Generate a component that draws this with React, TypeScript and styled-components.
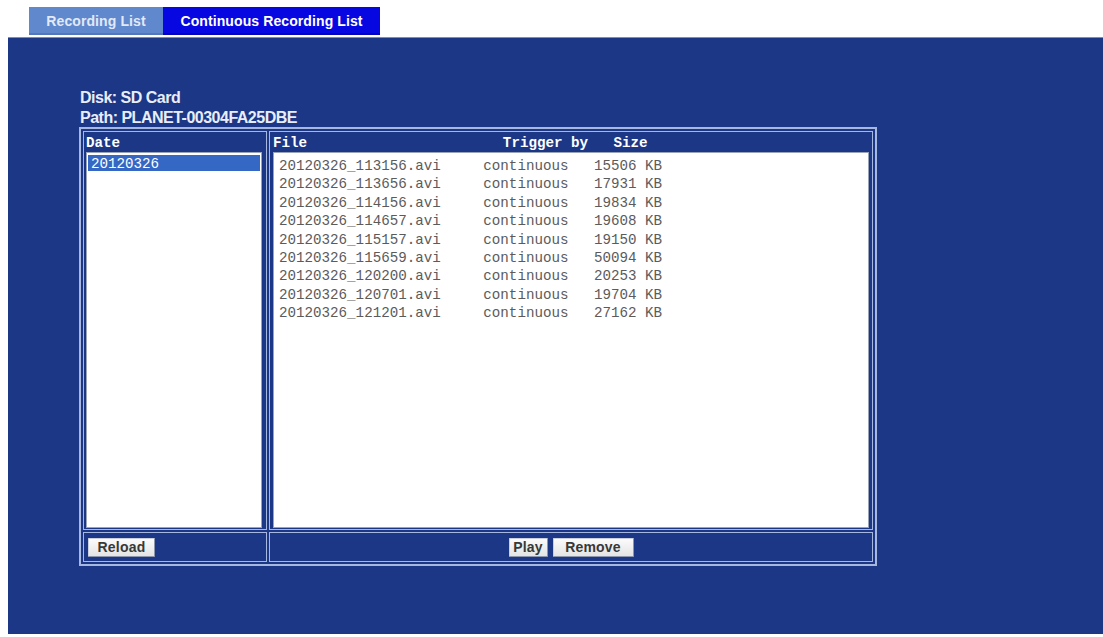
import React from "react";
import styled, { createGlobalStyle } from "styled-components";

const GlobalStyle = createGlobalStyle`
	html, body {
		margin: 0;
		padding: 0;
		background: #ffffff;
		font-family: "Liberation Sans", Arial, sans-serif;
	}
`;

const Page = styled.div`
	width: 1103px;
	height: 637px;
	padding: 7px 0 0 8px;
	box-sizing: border-box;
	display: flex;
	flex-direction: column;
	overflow: hidden;
`;

const TabBar = styled.div`
	display: flex;
	margin-left: 21px;
	height: 28px;
`;

const Tab = styled.div<{ $active?: boolean; $width: number }>`
	width: ${(p) => p.$width}px;
	display: flex;
	align-items: center;
	justify-content: center;
	font-size: 14px;
	font-weight: bold;
	letter-spacing: 0.1px;
	color: ${(p) => (p.$active ? "#ffffff" : "#e2e9f7")};
	background: ${(p) => (p.$active ? "#0707e2" : "#6088cc")};
	box-shadow: inset 0 -2px 0 ${(p) => (p.$active ? "#0404b8" : "#5377b8")};
`;

const Panel = styled.div`
	margin-top: 2px;
	height: 597px;
	background: #1b3786;
	border-top: 1px solid #7f8cae;
	padding: 49px 0 0 71px;
	box-sizing: border-box;
`;

const DiskInfo = styled.div`
	padding: 1px 0 0 1px;
	color: #e8eef9;
	font-size: 16px;
	font-weight: bold;
	letter-spacing: -0.5px;
	line-height: 19.5px;
`;

const Frame = styled.div`
	width: 798px;
	height: 439px;
	box-sizing: border-box;
	border: 2px solid #a6b7e0;
	padding: 2px;
	display: grid;
	grid-template-columns: 184px 604px;
	grid-template-rows: 399px 30px;
	gap: 2px;
`;

// upper cells hold a heading and a list box
const ListCell = styled.div<{ $pad: number }>`
	box-sizing: border-box;
	border: 1px solid #a6b7e0;
	display: flex;
	flex-direction: column;
	padding: 0 ${(p) => p.$pad}px;
`;

// lower cells hold the buttons
const ButtonCell = styled.div<{ $center?: boolean }>`
	box-sizing: border-box;
	border: 1px solid #a6b7e0;
	display: flex;
	align-items: center;
	justify-content: ${(p) => (p.$center ? "center" : "flex-start")};
	padding: 0 4px;
	gap: 5px;
`;

const Heading = styled.div`
	height: 20px;
	box-sizing: border-box;
	padding-top: 3px;
	line-height: 17px;
	font-family: "Liberation Mono", "Courier New", monospace;
	font-size: 14.2px;
	font-weight: bold;
	color: #ffffff;
	white-space: pre;
`;

const ListBox = styled.div<{ $width?: number }>`
	width: ${(p) => (p.$width ? `${p.$width}px` : "auto")};
	height: 376px;
	box-sizing: border-box;
	background: #ffffff;
	border: 1px solid #9aa4b8;
	padding: 2px 1px;
	font-family: "Liberation Mono", "Courier New", monospace;
	font-size: 14.2px;
`;

const FileList = styled(ListBox)`
	padding-top: 3px;
`;

const DateItem = styled.div<{ $selected?: boolean }>`
	height: 16px;
	line-height: 18px;
	padding-left: 3px;
	overflow: hidden;
	color: ${(p) => (p.$selected ? "#ffffff" : "#333333")};
	background: ${(p) => (p.$selected ? "#3468c4" : "transparent")};
`;

const FileRow = styled.div`
	height: 18.4px;
	line-height: 20px;
	padding-left: 4px;
	color: #5b5b5b;
	white-space: pre;
`;

const Button = styled.button<{ $width: number }>`
	width: ${(p) => p.$width}px;
	height: 19px;
	padding: 0;
	font-family: "Liberation Sans", Arial, sans-serif;
	font-size: 14px;
	font-weight: bold;
	letter-spacing: 0.2px;
	color: #383838;
	background: linear-gradient(#fbfbfb, #e4e4e4);
	border: 1px solid #c9cfdc;
	border-right-color: #8c96ad;
	border-bottom-color: #8c96ad;
	border-radius: 1px;
`;

const files = [
	["20120326_113156.avi", "15506"],
	["20120326_113656.avi", "17931"],
	["20120326_114156.avi", "19834"],
	["20120326_114657.avi", "19608"],
	["20120326_115157.avi", "19150"],
	["20120326_115659.avi", "50094"],
	["20120326_120200.avi", "20253"],
	["20120326_120701.avi", "19704"],
	["20120326_121201.avi", "27162"],
];

export default function App() {
	return (
		<>
			<GlobalStyle />
			<Page>
				<TabBar>
					<Tab $width={134}>Recording List</Tab>
					<Tab $width={217} $active>
						Continuous Recording List
					</Tab>
				</TabBar>
				<Panel>
					<DiskInfo>
						<div>Disk: SD Card</div>
						<div>Path: PLANET-00304FA25DBE</div>
					</DiskInfo>
					<Frame>
						<ListCell $pad={2}>
							<Heading>Date</Heading>
							<ListBox $width={176}>
								<DateItem $selected>20120326</DateItem>
							</ListBox>
						</ListCell>
						<ListCell $pad={3}>
							<Heading>{"File                       Trigger by   Size"}</Heading>
							<FileList>
								{files.map(([name, size]) => (
									<FileRow key={name}>
										{`${name}     continuous   ${size} KB`}
									</FileRow>
								))}
							</FileList>
						</ListCell>
						<ButtonCell>
							<Button $width={67}>Reload</Button>
						</ButtonCell>
						<ButtonCell $center>
							<Button $width={39}>Play</Button>
							<Button $width={81}>Remove</Button>
						</ButtonCell>
					</Frame>
				</Panel>
			</Page>
		</>
	);
}
